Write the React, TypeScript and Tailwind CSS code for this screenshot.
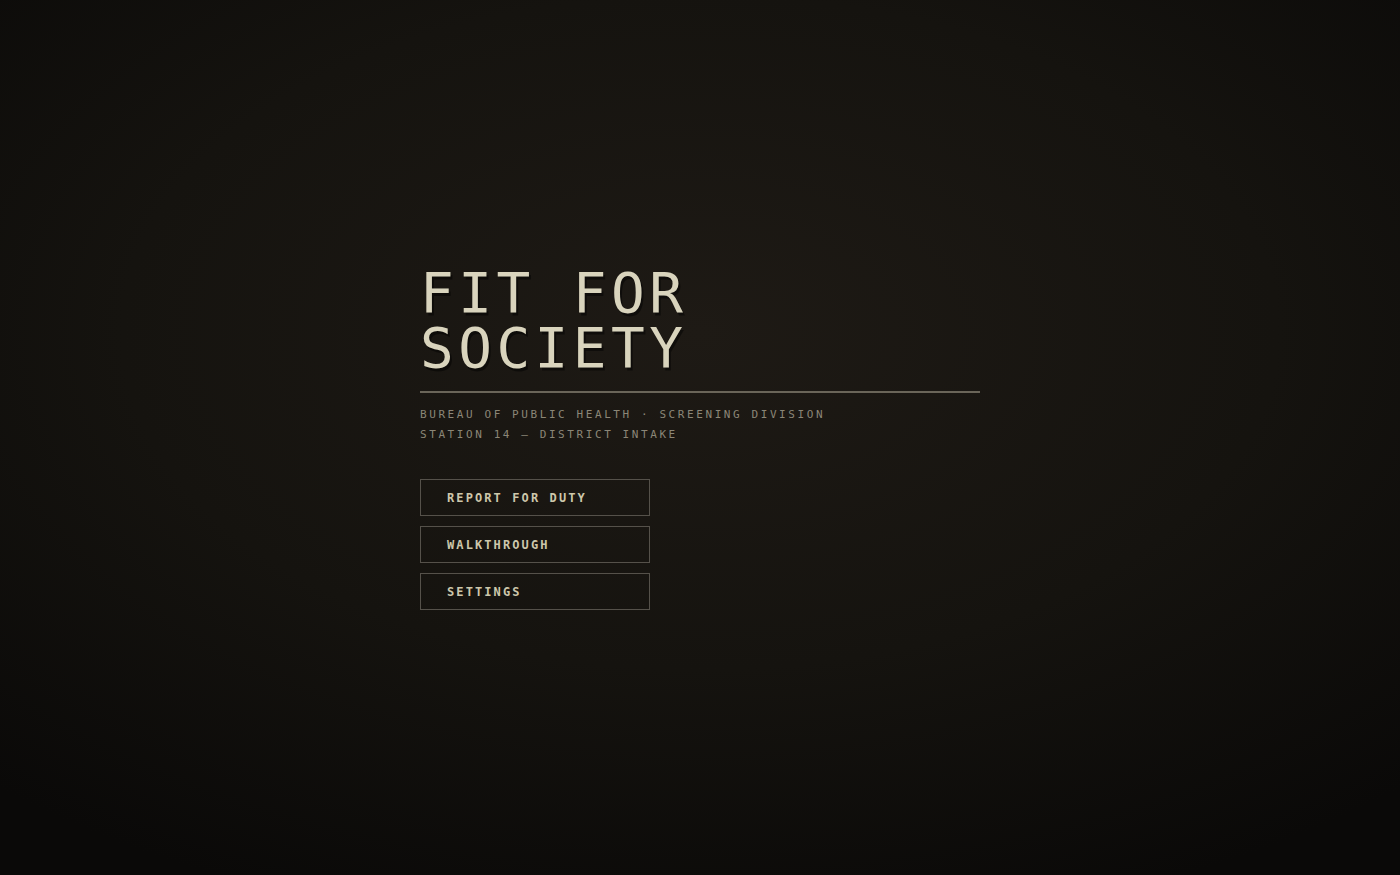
const menu = ["REPORT FOR DUTY", "WALKTHROUGH", "SETTINGS"]

export default function App() {
  return (
    <div
      className="flex h-[875px] w-full items-center justify-center bg-[radial-gradient(ellipse_75%_70%_at_50%_38%,#1e1a15_0%,#15130f_55%,#0a0908_100%)]"
      style={{ fontFamily: '"DejaVu Sans Mono", "Liberation Mono", monospace' }}
    >
      <div className="w-[560px]">
        <h1 className="text-[56px] leading-[55px] tracking-[0.08em] text-[#d9d4bd] [text-shadow:2px_3px_0_rgba(0,0,0,0.45)]">
          FIT FOR
          <br />
          SOCIETY
        </h1>
        <div className="mt-[16px] h-[2px] bg-[#6a6559]" />
        <div className="mt-[12px] text-[11px] leading-[20px] tracking-[0.235em] text-[#8b8677]">
          <p>BUREAU OF PUBLIC HEALTH · SCREENING DIVISION</p>
          <p>STATION 14 — DISTRICT INTAKE</p>
        </div>
        <div className="mt-[34px] flex w-[230px] flex-col gap-[10px]">
          {menu.map((label) => (
            <button
              key={label}
              className="h-[37px] border border-[#55514a] bg-transparent pl-[26px] text-left text-[12px] font-bold tracking-[0.175em] text-[#cdc7ab]"
            >
              {label}
            </button>
          ))}
        </div>
      </div>
    </div>
  )
}
